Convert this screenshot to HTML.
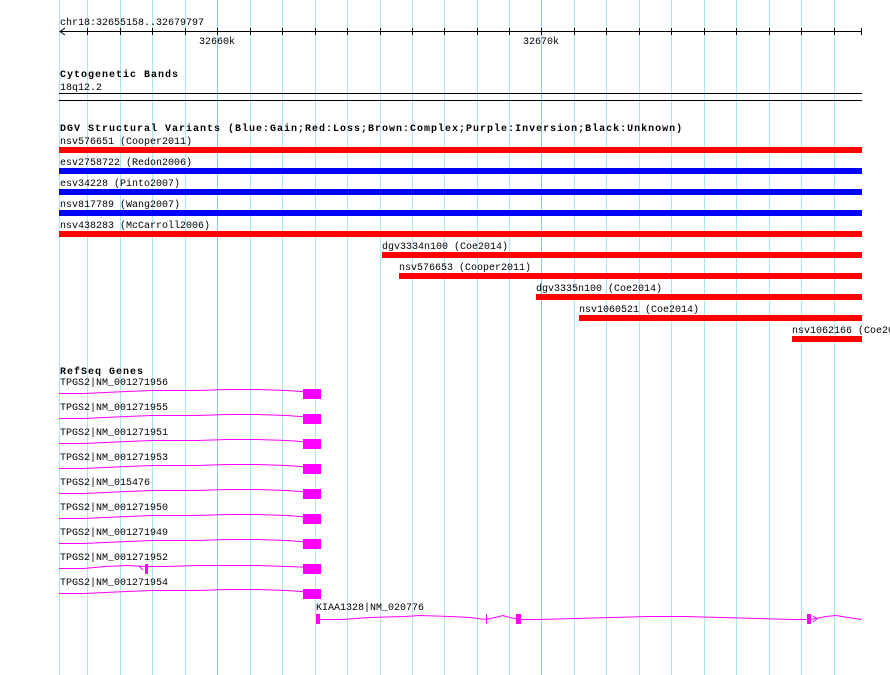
<!DOCTYPE html>
<html><head><meta charset="utf-8"><style>
html,body{margin:0;padding:0;background:#fff;width:890px;height:675px;overflow:hidden}
svg{display:block}
text{font-family:"Liberation Mono",monospace;font-size:10px;fill:#000}
.b{font-weight:bold;letter-spacing:1px}
</style></head><body>
<svg width="890" height="675" xmlns="http://www.w3.org/2000/svg">
<g stroke="#aee6ee" stroke-width="1">
<line x1="59.5" y1="0" x2="59.5" y2="675"/>
<line x1="87.5" y1="0" x2="87.5" y2="675"/>
<line x1="120.5" y1="0" x2="120.5" y2="675"/>
<line x1="152.5" y1="0" x2="152.5" y2="675"/>
<line x1="185.5" y1="0" x2="185.5" y2="675"/>
<line x1="217.5" y1="0" x2="217.5" y2="675" stroke="#8cc8e8"/>
<line x1="250.5" y1="0" x2="250.5" y2="675"/>
<line x1="282.5" y1="0" x2="282.5" y2="675"/>
<line x1="315.5" y1="0" x2="315.5" y2="675"/>
<line x1="347.5" y1="0" x2="347.5" y2="675"/>
<line x1="380.5" y1="0" x2="380.5" y2="675"/>
<line x1="412.5" y1="0" x2="412.5" y2="675"/>
<line x1="444.5" y1="0" x2="444.5" y2="675"/>
<line x1="477.5" y1="0" x2="477.5" y2="675"/>
<line x1="509.5" y1="0" x2="509.5" y2="675"/>
<line x1="541.5" y1="0" x2="541.5" y2="675" stroke="#8cc8e8"/>
<line x1="574.5" y1="0" x2="574.5" y2="675"/>
<line x1="606.5" y1="0" x2="606.5" y2="675"/>
<line x1="639.5" y1="0" x2="639.5" y2="675"/>
<line x1="671.5" y1="0" x2="671.5" y2="675"/>
<line x1="704.5" y1="0" x2="704.5" y2="675"/>
<line x1="736.5" y1="0" x2="736.5" y2="675"/>
<line x1="769.5" y1="0" x2="769.5" y2="675"/>
<line x1="801.5" y1="0" x2="801.5" y2="675"/>
<line x1="834.5" y1="0" x2="834.5" y2="675"/>
</g>
<!-- ruler -->
<text x="60" y="25">chr18:32655158..32679797</text>
<g stroke="#000" stroke-width="1">
<line x1="60" y1="31.5" x2="862" y2="31.5"/>
<polyline points="65,28 60,31.5 65,35" fill="none"/>
<line x1="87.5" y1="28" x2="87.5" y2="35"/><line x1="120.5" y1="28" x2="120.5" y2="35"/>
<line x1="152.5" y1="28" x2="152.5" y2="35"/><line x1="185.5" y1="28" x2="185.5" y2="35"/>
<line x1="217.5" y1="28" x2="217.5" y2="35"/><line x1="250.5" y1="28" x2="250.5" y2="35"/>
<line x1="282.5" y1="28" x2="282.5" y2="35"/><line x1="315.5" y1="28" x2="315.5" y2="35"/>
<line x1="347.5" y1="28" x2="347.5" y2="35"/><line x1="380.5" y1="28" x2="380.5" y2="35"/>
<line x1="412.5" y1="28" x2="412.5" y2="35"/><line x1="444.5" y1="28" x2="444.5" y2="35"/>
<line x1="477.5" y1="28" x2="477.5" y2="35"/><line x1="509.5" y1="28" x2="509.5" y2="35"/>
<line x1="541.5" y1="28" x2="541.5" y2="35"/><line x1="574.5" y1="28" x2="574.5" y2="35"/>
<line x1="606.5" y1="28" x2="606.5" y2="35"/><line x1="639.5" y1="28" x2="639.5" y2="35"/>
<line x1="671.5" y1="28" x2="671.5" y2="35"/><line x1="704.5" y1="28" x2="704.5" y2="35"/>
<line x1="736.5" y1="28" x2="736.5" y2="35"/><line x1="769.5" y1="28" x2="769.5" y2="35"/>
<line x1="801.5" y1="28" x2="801.5" y2="35"/><line x1="834.5" y1="28" x2="834.5" y2="35"/>
<line x1="861.5" y1="28" x2="861.5" y2="35"/>
</g>
<text x="199" y="44">32660k</text>
<text x="523" y="44">32670k</text>
<!-- cyto -->
<text class="b" x="60" y="77">Cytogenetic Bands</text>
<text x="60" y="90">18q12.2</text>
<rect x="59" y="93" width="803" height="1" fill="#000"/>
<rect x="59" y="100" width="803" height="1" fill="#000"/>
<!-- DGV -->
<text class="b" x="60" y="131">DGV Structural Variants (Blue:Gain;Red:Loss;Brown:Complex;Purple:Inversion;Black:Unknown)</text>
<text x="60" y="144">nsv576651 (Cooper2011)</text>
<rect x="59" y="147" width="803" height="6" fill="#f00"/>
<text x="60" y="165">esv2758722 (Redon2006)</text>
<rect x="59" y="168" width="803" height="6" fill="#00f"/>
<text x="60" y="186">esv34228 (Pinto2007)</text>
<rect x="59" y="189" width="803" height="6" fill="#00f"/>
<text x="60" y="207">nsv817789 (Wang2007)</text>
<rect x="59" y="210" width="803" height="6" fill="#00f"/>
<text x="60" y="228">nsv438283 (McCarroll2006)</text>
<rect x="59" y="231" width="803" height="6" fill="#f00"/>
<text x="382" y="249">dgv3334n100 (Coe2014)</text>
<rect x="382" y="252" width="480" height="6" fill="#f00"/>
<text x="399" y="270">nsv576653 (Cooper2011)</text>
<rect x="399" y="273" width="463" height="6" fill="#f00"/>
<text x="536" y="291">dgv3335n100 (Coe2014)</text>
<rect x="536" y="294" width="326" height="6" fill="#f00"/>
<text x="579" y="312">nsv1060521 (Coe2014)</text>
<rect x="579" y="315" width="283" height="6" fill="#f00"/>
<text x="792" y="333">nsv1062166 (Coe2014)</text>
<rect x="792" y="336" width="70" height="6" fill="#f00"/>
<!-- RefSeq -->
<text class="b" x="60" y="374">RefSeq Genes</text>
<g fill="none" stroke="#f0f" stroke-width="1">
<polyline id="g" points="59,393.5 84,393.5 105,392.5 127,391.5 152,390.5 197,390.5 227,389.5 257,389.5 287,390.5 313,392.5"/>
</g>
<g fill="#f0f">
<text x="60" y="385">TPGS2|NM_001271956</text>
</g>
<g id="genes"></g>
<g fill="none" stroke="#f0f">
<polyline points="59,418.5 84,418.5 105,417.5 127,416.5 152,415.5 197,415.5 227,414.5 257,414.5 287,415.5 313,417.5"/>
<polyline points="59,443.5 84,443.5 105,442.5 127,441.5 152,440.5 197,440.5 227,439.5 257,439.5 287,440.5 313,442.5"/>
<polyline points="59,468.5 84,468.5 105,467.5 127,466.5 152,465.5 197,465.5 227,464.5 257,464.5 287,465.5 313,467.5"/>
<polyline points="59,493.5 84,493.5 105,492.5 127,491.5 152,490.5 197,490.5 227,489.5 257,489.5 287,490.5 313,492.5"/>
<polyline points="59,518.5 84,518.5 105,517.5 127,516.5 152,515.5 197,515.5 227,514.5 257,514.5 287,515.5 313,517.5"/>
<polyline points="59,543.5 84,543.5 105,542.5 127,541.5 152,540.5 197,540.5 227,539.5 257,539.5 287,540.5 313,542.5"/>
<polyline points="59,568.5 84,568.5 105,566.5 127,565.5 145,566.5 167,566.5 197,565.5 227,565.5 257,565.5 287,566.5 313,567.5"/>
<polyline points="139,566 141,568 143,570"/>
<polyline points="59,593.5 84,593.5 105,592.5 127,591.5 152,590.5 197,590.5 227,589.5 257,589.5 287,590.5 313,592.5"/>
</g>
<g fill="#f0f">
<rect x="303" y="389" width="18" height="10"/>
<rect x="303" y="414" width="18" height="10"/>
<rect x="303" y="439" width="18" height="10"/>
<rect x="303" y="464" width="18" height="10"/>
<rect x="303" y="489" width="18" height="10"/>
<rect x="303" y="514" width="18" height="10"/>
<rect x="303" y="539" width="18" height="10"/>
<rect x="303" y="564" width="18" height="10"/>
<rect x="303" y="589" width="18" height="10"/>
<rect x="145" y="564" width="3" height="10"/>
</g>
<text x="60" y="410">TPGS2|NM_001271955</text>
<text x="60" y="435">TPGS2|NM_001271951</text>
<text x="60" y="460">TPGS2|NM_001271953</text>
<text x="60" y="485">TPGS2|NM_015476</text>
<text x="60" y="510">TPGS2|NM_001271950</text>
<text x="60" y="535">TPGS2|NM_001271949</text>
<text x="60" y="560">TPGS2|NM_001271952</text>
<text x="60" y="585">TPGS2|NM_001271954</text>
<!-- KIAA1328 -->
<text x="316" y="610">KIAA1328|NM_020776</text>
<g fill="none" stroke="#f0f">
<polyline points="318,619.5 342,619.5 370,617.5 405,616.5 420,615.5 450,616.5 470,617.5 486,619.5 495,617.5 503,615.5 510,617.5 520,619.5 540,619.5 575,618.5 611,617.5 648,616.5 685,616.5 722,617.5 758,618.5 793,619.5 810,619.5 826,616.5 836,615.5 848,617.5 862,619.5"/>
<polyline points="813,616 817,619 813,622"/>
</g>
<g fill="#f0f">
<rect x="316" y="614" width="4" height="10"/>
<rect x="486" y="614" width="1" height="10"/>
<rect x="516" y="614" width="5" height="10"/>
<rect x="807" y="614" width="4" height="10"/>
</g>
</svg>
</body></html>
